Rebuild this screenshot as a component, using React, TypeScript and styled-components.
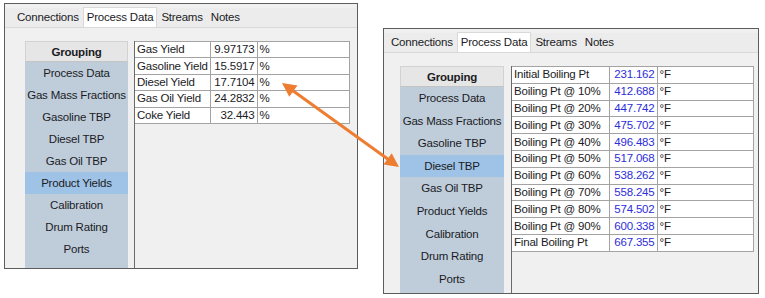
import styled, { createGlobalStyle } from "styled-components";

const GlobalStyle = createGlobalStyle`
  html, body {
    margin: 0;
    padding: 0;
    background: #ffffff;
  }
  body {
    font-family: "Liberation Sans", Arial, sans-serif;
    font-size: 11.5px;
    letter-spacing: -0.2px;
    color: #1b1b24;
  }
`

const Page = styled.div`
  position: relative;
  width: 765px;
  height: 298px;
  display: flex;
  align-items: flex-start;
  padding: 3px 0 0 4px;
  box-sizing: border-box;
  gap: 25px;
`

const Window = styled.div<{ $width: number; $offset: number }>`
  width: ${p => p.$width}px;
  height: 266px;
  margin-top: ${p => p.$offset}px;
  box-sizing: border-box;
  border: 1px solid #5c5c5c;
  background: #f0f0f0;
  display: flex;
  flex-direction: column;
  padding-top: 4px;
`

const TabStrip = styled.div<{ $indent: number }>`
  display: flex;
  height: 19px;
  padding-left: ${p => p.$indent}px;
  border-bottom: 1px solid #d9d9d9;
  background: #ececec;
`

const Tab = styled.div<{ $active?: boolean }>`
  padding: 0 3px;
  line-height: 19px;
  white-space: nowrap;
  background: ${p => (p.$active ? '#ffffff' : 'transparent')};
  border: 1px solid ${p => (p.$active ? '#d9d9d9' : 'transparent')};
  border-bottom: none;
  margin-top: -1px;
  height: 20px;
  box-sizing: border-box;
`

const Body = styled.div<{ $indent: number }>`
  flex: 1;
  display: flex;
  padding: 13px 0 0 ${p => p.$indent}px;
  min-height: 0;
`

const Sidebar = styled.div<{ $width: number }>`
  width: ${p => p.$width}px;
  background: #bfcddb;
  display: flex;
  flex-direction: column;
`

const GroupHeader = styled.div`
  height: 21px;
  line-height: 20px;
  text-align: center;
  font-weight: bold;
  background: #e6e6e6;
  border: 1px solid #d2d2d2;
  border-bottom-color: #c4c4c4;
  box-sizing: border-box;
`

const SideItem = styled.div<{ $active?: boolean; $height: number }>`
  height: ${p => p.$height}px;
  line-height: ${p => p.$height}px;
  text-align: center;
  white-space: nowrap;
  background: ${p => (p.$active ? '#9fc3e6' : 'transparent')};
`

const Content = styled.div<{ $gap: number }>`
  flex: 1;
  margin-left: ${p => p.$gap}px;
  border-left: 1px solid #6a6a6a;
  background: #f0f0f0;
`

const Grid = styled.table<{ $row: number }>`
  border-collapse: collapse;
  background: #ffffff;
  table-layout: fixed;
  td {
    border: 1px solid #a3a3a3;
    height: ${p => p.$row}px;
    padding: 0 2px;
    line-height: 15px;
    white-space: nowrap;
    overflow: hidden;
  }
  td:first-child {
    border-left: none;
  }
`

const ValueCell = styled.td<{ $blue?: boolean }>`
  text-align: right;
  color: ${p => (p.$blue ? '#2d2dd9' : 'inherit')};
`

const Overlay = styled.svg`
  position: absolute;
  left: 0;
  top: 0;
  pointer-events: none;
`

type Row = [string, string, string]

interface PanelProps {
  width: number
  offset: number
  tabIndent: number
  bodyIndent: number
  sideWidth: number
  itemHeight: number
  rowHeight: number
  gap: number
  selected: string
  cols: [number, number, number]
  rows: Row[]
  blue?: boolean
}

const groups = [
  'Process Data',
  'Gas Mass Fractions',
  'Gasoline TBP',
  'Diesel TBP',
  'Gas Oil TBP',
  'Product Yields',
  'Calibration',
  'Drum Rating',
  'Ports',
]

function Panel(props: PanelProps) {
  const total = props.cols.reduce((a, b) => a + b, 0)
  return (
    <Window $width={props.width} $offset={props.offset}>
      <TabStrip $indent={props.tabIndent}>
        <Tab>Connections</Tab>
        <Tab $active>Process Data</Tab>
        <Tab>Streams</Tab>
        <Tab>Notes</Tab>
      </TabStrip>
      <Body $indent={props.bodyIndent}>
        <Sidebar $width={props.sideWidth}>
          <GroupHeader>Grouping</GroupHeader>
          {groups.map(g => (
            <SideItem key={g} $height={props.itemHeight} $active={g === props.selected}>
              {g}
            </SideItem>
          ))}
        </Sidebar>
        <Content $gap={props.gap}>
          <Grid $row={props.rowHeight} style={{ width: total }}>
            <colgroup>
              {props.cols.map((c, i) => (
                <col key={i} style={{ width: c }} />
              ))}
            </colgroup>
            <tbody>
              {props.rows.map(r => (
                <tr key={r[0]}>
                  <td>{r[0]}</td>
                  <ValueCell $blue={props.blue}>{r[1]}</ValueCell>
                  <td>{r[2]}</td>
                </tr>
              ))}
            </tbody>
          </Grid>
        </Content>
      </Body>
    </Window>
  )
}

const yields: Row[] = [
  ['Gas Yield', '9.97173', '%'],
  ['Gasoline Yield', '15.5917', '%'],
  ['Diesel Yield', '17.7104', '%'],
  ['Gas Oil Yield', '24.2832', '%'],
  ['Coke Yield', '32.443', '%'],
]

const boiling: Row[] = [
  ['Initial Boiling Pt', '231.162', '°F'],
  ['Boiling Pt @ 10%', '412.688', '°F'],
  ['Boiling Pt @ 20%', '447.742', '°F'],
  ['Boiling Pt @ 30%', '475.702', '°F'],
  ['Boiling Pt @ 40%', '496.483', '°F'],
  ['Boiling Pt @ 50%', '517.068', '°F'],
  ['Boiling Pt @ 60%', '538.262', '°F'],
  ['Boiling Pt @ 70%', '558.245', '°F'],
  ['Boiling Pt @ 80%', '574.502', '°F'],
  ['Boiling Pt @ 90%', '600.338', '°F'],
  ['Final Boiling Pt', '667.355', '°F'],
]

// double headed arrow between the two dialogs
function Arrow() {
  const x1 = 282, y1 = 83, x2 = 399, y2 = 167
  const dx = x2 - x1, dy = y2 - y1
  const len = Math.sqrt(dx * dx + dy * dy)
  const ux = dx / len, uy = dy / len
  const px = -uy, py = ux
  const head = 14, half = 7
  const tri = (tx: number, ty: number, dir: number) => {
    const bx = tx + dir * ux * head
    const by = ty + dir * uy * head
    return `${tx},${ty} ${bx + px * half},${by + py * half} ${bx - px * half},${by - py * half}`
  }
  return (
    <Overlay width={765} height={298}>
      <line
        x1={x1 + ux * 10}
        y1={y1 + uy * 10}
        x2={x2 - ux * 10}
        y2={y2 - uy * 10}
        stroke="#ed7d31"
        strokeWidth={3}
      />
      <polygon points={tri(x1, y1, 1)} fill="#ed7d31" />
      <polygon points={tri(x2, y2, -1)} fill="#ed7d31" />
    </Overlay>
  )
}

export default function App() {
  return (
    <>
      <GlobalStyle />
      <Page>
        <Panel
          width={354}
          offset={0}
          tabIndent={8}
          bodyIndent={20}
          sideWidth={103}
          itemHeight={22}
          rowHeight={15.4}
          gap={6}
          selected="Product Yields"
          cols={[75, 47, 92]}
          rows={yields}
        />
        <Panel
          width={376}
          offset={25}
          tabIndent={3}
          bodyIndent={16}
          sideWidth={104}
          itemHeight={22.6}
          rowHeight={15.8}
          gap={7}
          selected="Diesel TBP"
          cols={[97, 48, 96]}
          rows={boiling}
          blue
        />
        <Arrow />
      </Page>
    </>
  )
}
